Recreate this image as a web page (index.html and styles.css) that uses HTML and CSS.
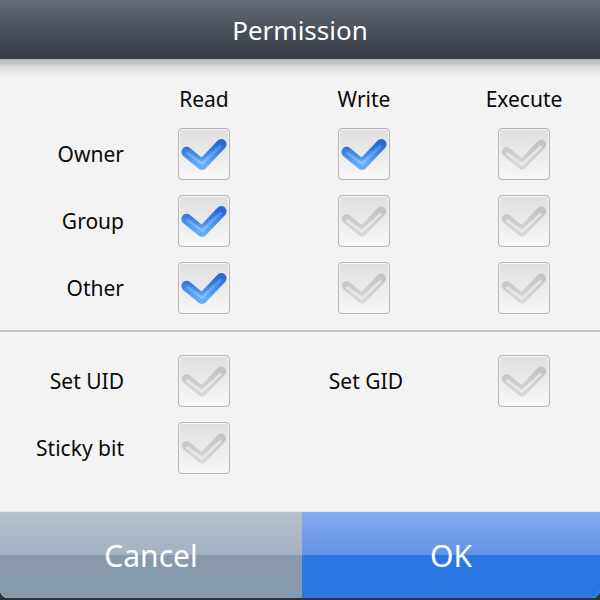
FILE: index.html
```html
<!DOCTYPE html>
<html lang="en">
<head>
    <meta charset="UTF-8">
    <meta name="viewport" content="width=device-width, initial-scale=1.0">
    <title>Permission</title>
    <link rel="stylesheet" href="styles.css">
</head>
<body>

    <!-- checkmarks used by every box -->
    <svg class="defs" width="0" height="0">
        <defs>
            <linearGradient id="blueFill" x1="0" y1="0" x2="0" y2="1">
                <stop offset="0" stop-color="#2a6ad6"/>
                <stop offset="1" stop-color="#62adf8"/>
            </linearGradient>
            <linearGradient id="blueShine" x1="0" y1="0" x2="0" y2="1">
                <stop offset="0" stop-color="#5a9cf0"/>
                <stop offset="1" stop-color="#a8d6ff"/>
            </linearGradient>
            <linearGradient id="greyFill" x1="0" y1="0" x2="0" y2="1">
                <stop offset="0" stop-color="#c4c4c4"/>
                <stop offset="1" stop-color="#d6d6d6"/>
            </linearGradient>
        </defs>
        <symbol id="checkOn" viewBox="0 0 52 52">
            <path d="M8 24 L24 37 L44 16" fill="none" stroke="url(#blueFill)" stroke-width="11" stroke-linecap="round" stroke-linejoin="round"/>
            <path d="M9 25 L24 36 L43 18" fill="none" stroke="url(#blueShine)" stroke-width="3" stroke-linecap="round" stroke-linejoin="round" opacity="0.6"/>
        </symbol>
        <symbol id="checkOff" viewBox="0 0 52 52">
            <path d="M8 24 L24 37 L44 16" fill="none" stroke="url(#greyFill)" stroke-width="10" stroke-linecap="round" stroke-linejoin="round"/>
            <path d="M9 26 L24 37 L43 19" fill="none" stroke="#ececec" stroke-width="3" stroke-linecap="round" stroke-linejoin="round" opacity="0.8"/>
        </symbol>
    </svg>

    <div class="dialog">
        <header class="title">Permission</header>

        <main class="content">
            <div class="grid perms">
                <span></span>
                <span class="col-head">Read</span>
                <span class="col-head">Write</span>
                <span class="col-head">Execute</span>

                <span class="label">Owner</span>
                <span class="box"><svg><use href="#checkOn"/></svg></span>
                <span class="box"><svg><use href="#checkOn"/></svg></span>
                <span class="box"><svg><use href="#checkOff"/></svg></span>

                <span class="label">Group</span>
                <span class="box"><svg><use href="#checkOn"/></svg></span>
                <span class="box"><svg><use href="#checkOff"/></svg></span>
                <span class="box"><svg><use href="#checkOff"/></svg></span>

                <span class="label">Other</span>
                <span class="box"><svg><use href="#checkOn"/></svg></span>
                <span class="box"><svg><use href="#checkOff"/></svg></span>
                <span class="box"><svg><use href="#checkOff"/></svg></span>
            </div>

            <hr class="divider">

            <div class="grid special">
                <span class="label">Set UID</span>
                <span class="box"><svg><use href="#checkOff"/></svg></span>
                <span class="label inner">Set GID</span>
                <span class="box"><svg><use href="#checkOff"/></svg></span>

                <span class="label">Sticky bit</span>
                <span class="box"><svg><use href="#checkOff"/></svg></span>
            </div>
        </main>

        <footer class="actions">
            <button class="btn cancel">Cancel</button>
            <button class="btn ok">OK</button>
        </footer>
    </div>

</body>
</html>
```

FILE: styles.css
```css
/* Estilos gerais */
html {
    background-color: #2b323c;
}

body {
    margin: 0;
    width: 600px;
    height: 600px;
    font-family: "Noto Sans", "DejaVu Sans", sans-serif;
}

.defs {
    position: absolute;
    width: 0;
    height: 0;
}

.dialog {
    display: flex;
    flex-direction: column;
    height: 598px;
    background-color: #f3f3f3;
    border-radius: 0 0 8px 8px;
    overflow: hidden;
}

/* Barra de titulo */
.title {
    height: 59px;
    display: flex;
    align-items: center;
    justify-content: center;
    color: #ffffff;
    font-size: 26px;
    background: linear-gradient(#656b74, #4a515b 50%, #353c47);
}

.content {
    flex: 1;
    padding-top: 25px;
    background: linear-gradient(#b1b5b9 0, #d9dbdc 8px, #eeeeee 16px, #f3f3f3 24px);
}

/* Grade das caixas */
.grid {
    display: grid;
    grid-template-columns: 124px repeat(3, 160px);
    row-gap: 15px;
    align-items: center;
    justify-items: center;
}

.perms {
    grid-template-rows: 29px repeat(3, 52px);
}

.special {
    grid-template-rows: repeat(2, 52px);
}

.col-head {
    font-size: 21px;
    color: #0a0a0a;
}

.label {
    justify-self: end;
    font-size: 21px;
    color: #0a0a0a;
}

.label.inner {
    padding-right: 41px;
}

.box {
    width: 50px;
    height: 50px;
    border: 1px solid #b4b4b4;
    border-radius: 4px;
    background: linear-gradient(#dedede, #ececec 60%, #f8f8f8);
    box-shadow: inset 0 0 0 1px #f6f6f6;
}

.box svg {
    display: block;
    width: 50px;
    height: 50px;
}

.divider {
    margin: 16px 0 23px;
    border: none;
    height: 2px;
    background-color: #c4c4c4;
}

/* Botoes */
.actions {
    height: 86px;
    display: flex;
    border-top: 1px solid #e2e6ec;
}

.btn {
    border: none;
    margin: 0;
    padding: 0;
    font-family: "Noto Sans", "DejaVu Sans", sans-serif;
    font-size: 30px;
    color: #ffffff;
}

.cancel {
    width: 302px;
    background: linear-gradient(#b6c0cc, #a3b1c1 50%, #8899ae 50%, #8799ad);
}

.ok {
    flex: 1;
    background: linear-gradient(#86acef, #6392e6 50%, #2b78e4 50%, #2a76e2);
}
```
